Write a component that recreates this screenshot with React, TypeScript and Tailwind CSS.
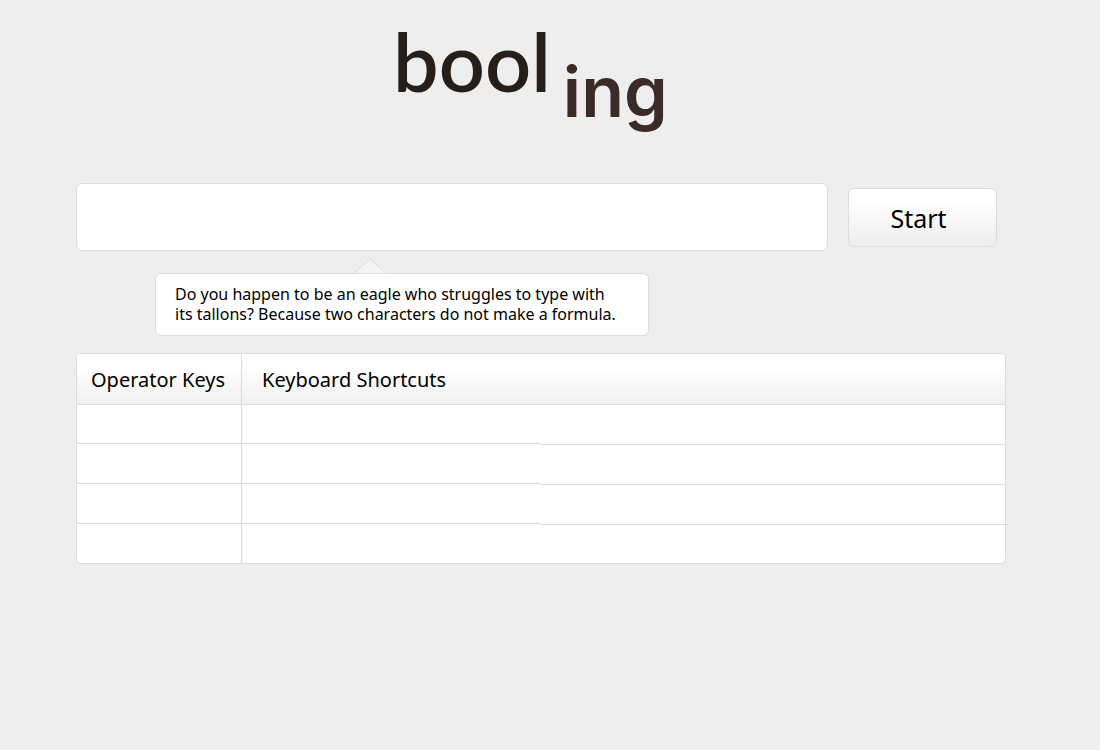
const rows = [0, 1, 2, 3];

function Logo() {
  return (
    <h1 className="flex h-[183px] items-start gap-3 pl-[317px] text-[#261f19]">
      <span className="pt-[13px] font-[family-name:Lato,sans-serif] text-[81px] leading-[96px] font-semibold">bool</span>
      <span className="pt-[44px] font-[family-name:Inter,sans-serif] text-[70px] leading-[96px] font-semibold text-[#3a2b27]">ing</span>
    </h1>
  );
}

function Hint() {
  return (
    <div id="formula-hint" role="status" className="relative ml-[79px] w-[494px] rounded-md border border-[#dcdcdc] bg-white pt-[10px] pb-[11px] pl-[19px] font-[family-name:Noto_Sans,sans-serif] text-base leading-5 whitespace-nowrap">
      <svg className="absolute -top-4 left-[197px]" width="34" height="15" viewBox="0 0 34 15" aria-hidden="true">
        <path d="M0.5 15.5L17 0.8L33.5 15.5" fill="#f4f4f4" stroke="#dcdcdc" />
      </svg>
      <p>
        Do you happen to be an eagle who struggles to type with
        <br />
        its tallons? Because two characters do not make a formula.
      </p>
    </div>
  );
}

function KeysTable() {
  return (
    <div className="rounded-[5px] border border-[#dcdcdc] bg-white">
      <table className="w-full table-fixed border-separate border-spacing-0 text-left">
        <colgroup>
          <col className="w-[165px]" />
          <col className="w-[299px]" />
          <col />
        </colgroup>
        <thead>
          <tr className="h-[51px] bg-linear-to-b from-white from-25% to-[#f0f0f0] text-xl">
            <th scope="col" className="rounded-tl border-r border-b border-[#dcdcdc] pt-0.5 pl-[14px] font-normal whitespace-nowrap">
              Operator Keys
            </th>
            <th scope="col" colSpan={2} className="rounded-tr border-b border-[#dcdcdc] pt-0.5 pl-5 font-normal">
              Keyboard Shortcuts
            </th>
          </tr>
        </thead>
        <tbody>
          {rows.map((row) => (
            <tr key={row} className="group h-10 first:h-[39px] last:h-[39px]">
              <td className="border-r border-b border-[#dcdcdc] group-last:border-b-0" />
              <td className="border-b border-[#dcdcdc] group-last:border-b-0" />
              <td className="relative after:absolute after:-right-[2px] after:-bottom-px after:left-0 after:h-px after:bg-[#dcdcdc] group-last:after:hidden group-nth-3:after:-right-1" />
            </tr>
          ))}
        </tbody>
      </table>
    </div>
  );
}

export default function App() {
  return (
    <main className="min-h-screen bg-[#eeeeee] pr-[94px] pl-[76px] font-[family-name:Noto_Sans,sans-serif] text-black">
      <Logo />
      <form className="flex items-center gap-5 pr-[9px]" onSubmit={(e) => e.preventDefault()}>
        <input
          type="text"
          aria-label="Formula"
          aria-describedby="formula-hint"
          className="h-[68px] min-w-0 flex-1 rounded-md border border-[#dcdcdc] bg-white px-5 text-2xl outline-none"
        />
        <button
          type="submit"
          className="h-[59px] w-[149px] rounded-md border border-[#dcdcdc] bg-linear-to-b from-white from-20% to-[#ededed] pt-1 pr-2 text-[25px]"
        >
          Start
        </button>
      </form>
      <div className="pt-[22px] pb-[17px]">
        <Hint />
      </div>
      <KeysTable />
    </main>
  );
}
